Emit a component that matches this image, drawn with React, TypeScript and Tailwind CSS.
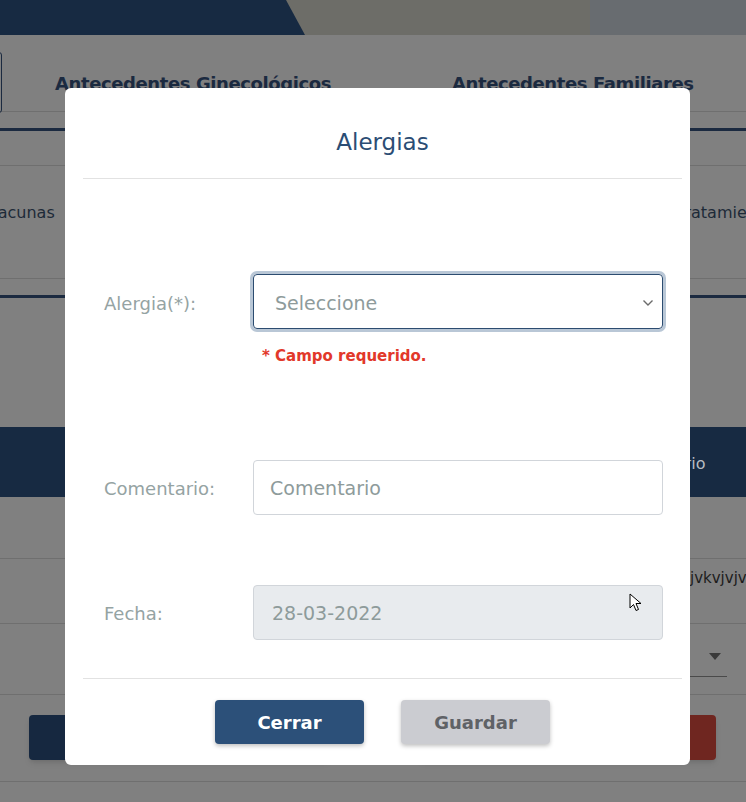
import React from "react";

function Line({ className = "" }: { className?: string }) {
  return <div className={"h-px bg-[#6f6f6f] " + className}></div>;
}

export default function App() {
  return (
    <div className="relative h-[802px] w-[746px] overflow-hidden bg-[#808080] font-['DejaVu_Sans',sans-serif]">
      {/* pagina de fondo (oscurecida) */}
      <div className="relative h-[35px] bg-[#6d6d68]">
        <div className="absolute inset-y-0 left-0 w-[310px] bg-[#172a42] [clip-path:polygon(0_0,286px_0,305px_100%,0_100%)]"></div>
        <div className="absolute inset-y-0 right-0 w-[156px] bg-[#686c70]"></div>
      </div>

      <div className="relative h-[77px] border-b border-[#6f6f6f]">
        <div className="absolute left-[-40px] top-[17px] h-[61px] w-[42px] rounded-r-[3px] border border-[#1b2a40]"></div>
        <div className="absolute left-[55px] top-[35px] text-[18px] font-bold tracking-[-0.4px] text-[#1b2a40]">
          Antecedentes Ginecológicos
        </div>
        <div className="absolute left-[452px] top-[35px] text-[18px] font-bold tracking-[-0.4px] text-[#1b2a40]">
          Antecedentes Familiares
        </div>
      </div>
      <div className="mt-[16px] h-[3px] bg-[#1b2a40]"></div>
      <div className="mt-[34px] h-px bg-[#6f6f6f]"></div>
      <div className="relative h-[112px]">
        <span className="absolute left-[-12px] top-[35px] text-[16px] text-[#1d2a38]">Vacunas</span>
        <span className="absolute left-[677px] top-[35px] whitespace-nowrap text-[16px] text-[#1d2a38]">Tratamiento</span>
      </div>
      <Line />
      <div className="mt-[16px] h-[3px] bg-[#1b2a40]"></div>
      <div className="relative mt-[129px] h-[70px] bg-[#172a42]">
        <span className="absolute left-[612px] top-[25px] whitespace-nowrap text-[16px] text-[#b7bcc2]">Comentario</span>
      </div>
      <Line className="mt-[61px]" />
      <div className="relative h-[64px]">
        <span className="absolute left-[690px] top-[8px] whitespace-nowrap text-[15px] text-[#1c1c1c]">jvkvjvjvj</span>
      </div>
      <Line />
      <div className="relative h-[70px]">
        <div className="absolute left-[600px] top-[52px] h-px w-[127px] bg-[#4a4a4a]"></div>
        <svg className="absolute left-[709px] top-[29px]" width="12" height="7" viewBox="0 0 12 7">
          <polygon points="0,0 12,0 6,7" fill="#3a3a3a" />
        </svg>
      </div>
      <Line />
      <div className="relative h-[86px]">
        <div className="absolute left-[29px] top-[20px] h-[45px] w-[300px] rounded-[4px] bg-[#162840] shadow-md"></div>
        <div className="absolute left-[420px] top-[20px] h-[45px] w-[296px] rounded-[4px] bg-[#6f2620] shadow-md"></div>
      </div>
      <Line />

      {/* modal */}
      <div className="absolute left-[65px] top-[88px] flex h-[677px] w-[625px] flex-col rounded-[6px] bg-white pl-[18px] pr-[8px]">
        <div className="flex h-[91px] items-center justify-center border-b border-[#e2e2e2] pt-[18px]">
          <h2 className="text-[23px] font-normal text-[#2b4d74]">Alergias</h2>
        </div>

        <div className="flex h-[500px] flex-col border-b border-[#e2e2e2] pt-[95px]">
          <div className="flex h-[55px] items-center">
            <label className="w-[170px] pl-[21px] pt-[3px] text-[18px] text-[#95a3a3]">Alergia(*):</label>
            <div className="flex h-[55px] w-[410px] items-center justify-between rounded-[4px] border border-[#2c4c70] pl-[21px] pr-[8px] pt-[3px] ring-[3px] ring-[#b9c7d6]">
              <span className="text-[19px] text-[#8e9b9b]">Seleccione</span>
              <svg width="12" height="8" viewBox="0 0 12 8" fill="none">
                <polyline points="1.5,1.5 6,6 10.5,1.5" stroke="#6b6b6b" strokeWidth="1.4" />
              </svg>
            </div>
          </div>
          <div className="ml-[179px] mt-[16px] text-[15px] font-bold text-[#e2382a]">* Campo requerido.</div>

          <div className="mt-[92px] flex h-[55px] items-center">
            <label className="w-[170px] pl-[21px] pt-[3px] text-[18px] text-[#95a3a3]">Comentario:</label>
            <div className="flex h-[55px] w-[410px] items-center rounded-[4px] border border-[#d1d5da] pl-[16px] pt-[3px]">
              <span className="text-[19px] text-[#8e9b9b]">Comentario</span>
            </div>
          </div>

          <div className="mt-[70px] flex h-[55px] items-center">
            <label className="w-[170px] pl-[21px] pt-[3px] text-[18px] text-[#95a3a3]">Fecha:</label>
            <div className="relative flex h-[55px] w-[410px] items-center rounded-[4px] border border-[#d1d5da] bg-[#e8ebee] pl-[18px] pt-[3px]">
              <span className="text-[19px] text-[#8e9b9b]">28-03-2022</span>
              <svg className="absolute left-[375px] top-[7px]" width="13" height="19" viewBox="0 0 13 19">
                <path d="M1 1 L1 15 L4.5 11.5 L7 17.5 L9.5 16.5 L7 10.5 L12 10.5 Z" fill="white" stroke="black" strokeWidth="1" strokeLinejoin="round" />
              </svg>
            </div>
          </div>
        </div>

        <div className="flex justify-center gap-[37px] pt-[21px]">
          <button className="h-[44px] w-[149px] rounded-[4px] bg-[#2c5079] text-[18px] font-bold text-white shadow-[0_2px_4px_rgba(0,0,0,0.25)]">
            Cerrar
          </button>
          <button className="h-[44px] w-[149px] rounded-[4px] bg-[#cbccd1] text-[18px] font-bold text-[#5f6266] shadow-[0_2px_4px_rgba(0,0,0,0.25)]">
            Guardar
          </button>
        </div>
      </div>
    </div>
  );
}
